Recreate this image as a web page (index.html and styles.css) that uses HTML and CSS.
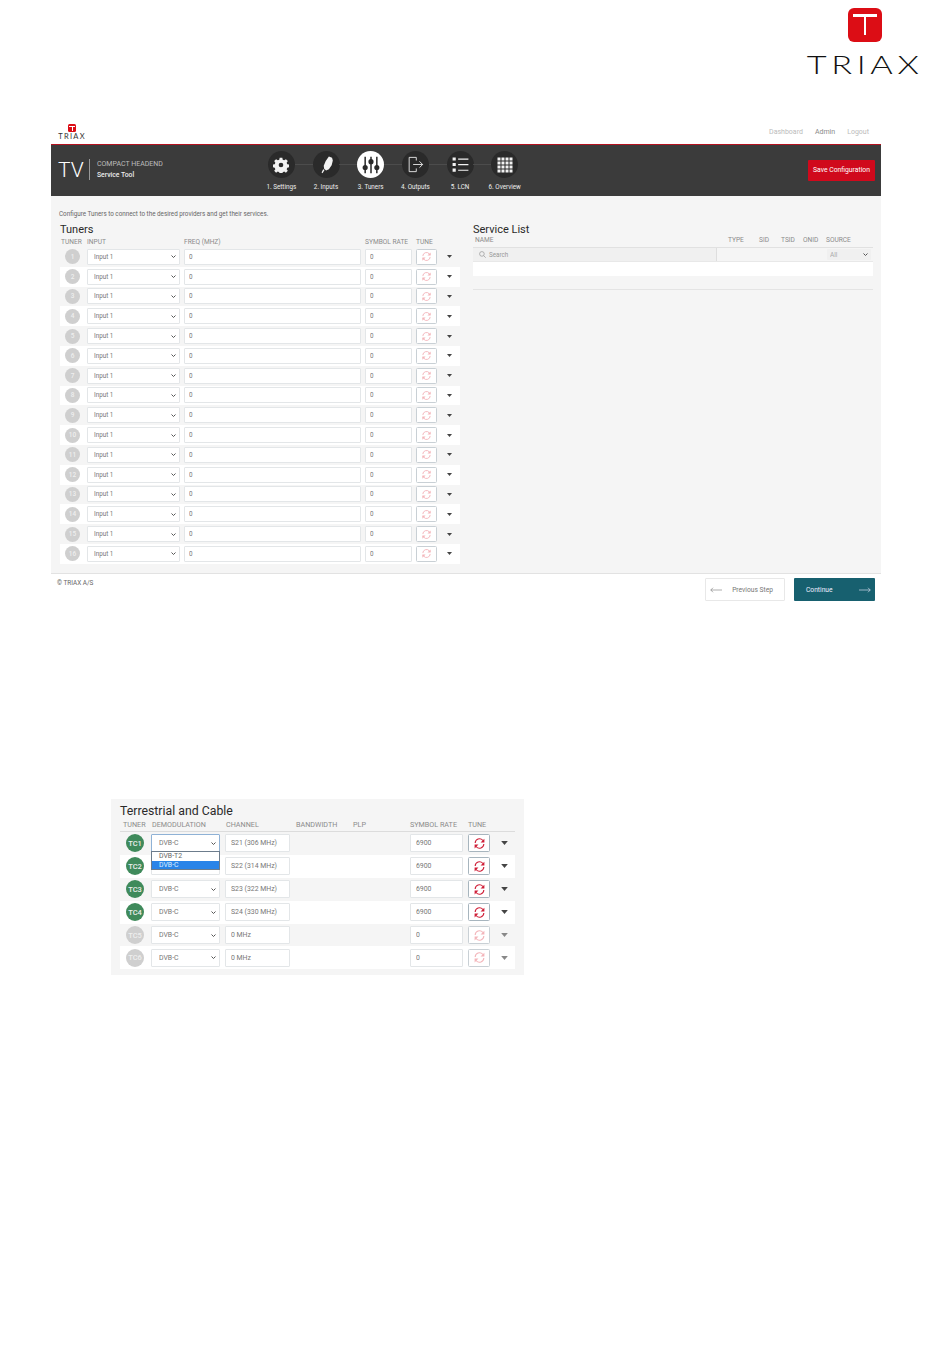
FILE: index.html
```html
<!DOCTYPE html>
<html lang="en">
<head>
    <meta charset="UTF-8">
    <title>TRIAX TV Compact Headend - Tuners</title>
    <link rel="stylesheet" href="styles.css">
</head>
<body>
    <svg class="sprites" width="0" height="0">
        <symbol id="i-sync" viewBox="0 0 24 24">
            <path d="M4 11a8 8 0 0 1 14-5l2 2" fill="none" stroke="currentColor" stroke-width="2"/>
            <path d="M21 3v7h-7z" fill="currentColor"/>
            <path d="M20 13a8 8 0 0 1-14 5l-2-2" fill="none" stroke="currentColor" stroke-width="2"/>
            <path d="M3 21v-7h7z" fill="currentColor"/>
        </symbol>
        <symbol id="i-caret" viewBox="0 0 10 6">
            <path d="M0 0h10L5 6z" fill="currentColor"/>
        </symbol>
    </svg>

    <div class="doc-logo">
        <div class="logo-block">
            <span class="mark"></span>
            <span class="wordmark">TRIAX</span>
        </div>
    </div>

    <div class="app">
        <div class="topbar">
            <div class="brand-small">
                <span class="mark"></span>
                <span class="wordmark">TRIAX</span>
            </div>
            <nav class="toplinks">
                <a>Dashboard</a>
                <a class="current">Admin</a>
                <a>Logout</a>
            </nav>
        </div>

        <header class="app-header">
            <div class="product">
                <span class="product-tv">TV</span>
                <div class="product-name">
                    <span>COMPACT HEADEND</span>
                    <strong>Service Tool</strong>
                </div>
            </div>
            <ol class="steps">
                <li class="step">
                    <span class="step-dot">
                        <svg viewBox="0 0 24 24" width="16" height="16"><path fill="currentColor" d="M10 1h4l.6 3 2.2.9 2.6-1.700 2.800 2.800-1.700 2.600.9 2.200 3 .6v4l-3 .6-.9 2.200 1.700 2.600-2.800 2.800-2.600-1.700-2.200.9-.6 3h-4l-.6-3-2.200-.9-2.600 1.700-2.800-2.800 1.700-2.600-.9-2.200-3-.6v-4l3-.6.9-2.200-1.700-2.600 2.800-2.800 2.600 1.700 2.200-.9zM12 8.500a3.500 3.500 0 1 0 0 7 3.500 3.500 0 0 0 0-7z"/></svg>
                    </span>
                    <span class="step-label">1. Settings</span>
                </li>
                <li class="step">
                    <span class="step-dot">
                        <svg viewBox="0 0 24 24" width="19" height="19"><path fill="currentColor" d="M15 2l4 1.500 1 3.500-1.500 6-3.500 5-3.500 1.500-2.500-2-.5-4 2.500-6zM9.500 19l-2.500 4-1.200-.8 2-4.200z"/></svg>
                    </span>
                    <span class="step-label">2. Inputs</span>
                </li>
                <li class="step is-active">
                    <span class="step-dot">
                        <svg viewBox="0 0 24 24" width="20" height="20"><g stroke="currentColor" stroke-width="1.800" fill="currentColor"><path d="M5 2v20M12 2v20M19 2v20"/><circle cx="5" cy="15" r="2.200"/><circle cx="12" cy="8" r="2.200"/><circle cx="19" cy="15" r="2.200"/></g></svg>
                    </span>
                    <span class="step-label">3. Tuners</span>
                </li>
                <li class="step">
                    <span class="step-dot">
                        <svg viewBox="0 0 24 24" width="19" height="19" fill="none" stroke="currentColor" stroke-width="1.100"><path d="M13 7V3H4v18h9v-4M9 12h12M17 8l4 4-4 4"/></svg>
                    </span>
                    <span class="step-label">4. Outputs</span>
                </li>
                <li class="step">
                    <span class="step-dot">
                        <svg viewBox="0 0 24 24" width="19" height="19" fill="currentColor"><path d="M2 3h4v4H2zM2 10h4v4H2zM2 17h4v4H2zM9 4.500h13V6H9zM9 11.500h13V13H9zM9 18.500h13V20H9z"/></svg>
                    </span>
                    <span class="step-label">5. LCN</span>
                </li>
                <li class="step">
                    <span class="step-dot">
                        <svg viewBox="0 0 24 24" width="18" height="18" fill="currentColor"><path d="M2 2h4v4H2zM7.300 2h4v4h-4zM12.700 2h4v4h-4zM18 2h4v4h-4zM2 7.300h4v4H2zM7.300 7.300h4v4h-4zM12.700 7.300h4v4h-4zM18 7.300h4v4h-4zM2 12.700h4v4H2zM7.300 12.700h4v4h-4zM12.700 12.700h4v4h-4zM18 12.700h4v4h-4zM2 18h4v4H2zM7.300 18h4v4h-4zM12.700 18h4v4h-4zM18 18h4v4h-4z"/></svg>
                    </span>
                    <span class="step-label">6. Overview</span>
                </li>
            </ol>
            <button class="save-btn">Save Configuration</button>
        </header>

        <main class="app-main">
            <p class="intro">Configure Tuners to connect to the desired providers and get their services.</p>
            <div class="panels">
                <section class="tuners">
                    <h2>Tuners</h2>
                    <div class="tuner-grid col-heads">
                        <span>TUNER</span><span>INPUT</span><span>FREQ (MHZ)</span><span>SYMBOL RATE</span><span>TUNE</span>
                    </div>
                    <div class="tuner-grid tuner-row">
                        <span class="num">1</span>
                        <select><option>Input 1</option></select>
                        <input type="text" value="0">
                        <input type="text" value="0">
                        <button class="tune"><svg width="11" height="11"><use href="#i-sync"/></svg></button>
                        <svg class="caret" width="5" height="3"><use href="#i-caret"/></svg>
                    </div>
                    <div class="tuner-grid tuner-row">
                        <span class="num">2</span>
                        <select><option>Input 1</option></select>
                        <input type="text" value="0">
                        <input type="text" value="0">
                        <button class="tune"><svg width="11" height="11"><use href="#i-sync"/></svg></button>
                        <svg class="caret" width="5" height="3"><use href="#i-caret"/></svg>
                    </div>
                    <div class="tuner-grid tuner-row">
                        <span class="num">3</span>
                        <select><option>Input 1</option></select>
                        <input type="text" value="0">
                        <input type="text" value="0">
                        <button class="tune"><svg width="11" height="11"><use href="#i-sync"/></svg></button>
                        <svg class="caret" width="5" height="3"><use href="#i-caret"/></svg>
                    </div>
                    <div class="tuner-grid tuner-row">
                        <span class="num">4</span>
                        <select><option>Input 1</option></select>
                        <input type="text" value="0">
                        <input type="text" value="0">
                        <button class="tune"><svg width="11" height="11"><use href="#i-sync"/></svg></button>
                        <svg class="caret" width="5" height="3"><use href="#i-caret"/></svg>
                    </div>
                    <div class="tuner-grid tuner-row">
                        <span class="num">5</span>
                        <select><option>Input 1</option></select>
                        <input type="text" value="0">
                        <input type="text" value="0">
                        <button class="tune"><svg width="11" height="11"><use href="#i-sync"/></svg></button>
                        <svg class="caret" width="5" height="3"><use href="#i-caret"/></svg>
                    </div>
                    <div class="tuner-grid tuner-row">
                        <span class="num">6</span>
                        <select><option>Input 1</option></select>
                        <input type="text" value="0">
                        <input type="text" value="0">
                        <button class="tune"><svg width="11" height="11"><use href="#i-sync"/></svg></button>
                        <svg class="caret" width="5" height="3"><use href="#i-caret"/></svg>
                    </div>
                    <div class="tuner-grid tuner-row">
                        <span class="num">7</span>
                        <select><option>Input 1</option></select>
                        <input type="text" value="0">
                        <input type="text" value="0">
                        <button class="tune"><svg width="11" height="11"><use href="#i-sync"/></svg></button>
                        <svg class="caret" width="5" height="3"><use href="#i-caret"/></svg>
                    </div>
                    <div class="tuner-grid tuner-row">
                        <span class="num">8</span>
                        <select><option>Input 1</option></select>
                        <input type="text" value="0">
                        <input type="text" value="0">
                        <button class="tune"><svg width="11" height="11"><use href="#i-sync"/></svg></button>
                        <svg class="caret" width="5" height="3"><use href="#i-caret"/></svg>
                    </div>
                    <div class="tuner-grid tuner-row">
                        <span class="num">9</span>
                        <select><option>Input 1</option></select>
                        <input type="text" value="0">
                        <input type="text" value="0">
                        <button class="tune"><svg width="11" height="11"><use href="#i-sync"/></svg></button>
                        <svg class="caret" width="5" height="3"><use href="#i-caret"/></svg>
                    </div>
                    <div class="tuner-grid tuner-row">
                        <span class="num">10</span>
                        <select><option>Input 1</option></select>
                        <input type="text" value="0">
                        <input type="text" value="0">
                        <button class="tune"><svg width="11" height="11"><use href="#i-sync"/></svg></button>
                        <svg class="caret" width="5" height="3"><use href="#i-caret"/></svg>
                    </div>
                    <div class="tuner-grid tuner-row">
                        <span class="num">11</span>
                        <select><option>Input 1</option></select>
                        <input type="text" value="0">
                        <input type="text" value="0">
                        <button class="tune"><svg width="11" height="11"><use href="#i-sync"/></svg></button>
                        <svg class="caret" width="5" height="3"><use href="#i-caret"/></svg>
                    </div>
                    <div class="tuner-grid tuner-row">
                        <span class="num">12</span>
                        <select><option>Input 1</option></select>
                        <input type="text" value="0">
                        <input type="text" value="0">
                        <button class="tune"><svg width="11" height="11"><use href="#i-sync"/></svg></button>
                        <svg class="caret" width="5" height="3"><use href="#i-caret"/></svg>
                    </div>
                    <div class="tuner-grid tuner-row">
                        <span class="num">13</span>
                        <select><option>Input 1</option></select>
                        <input type="text" value="0">
                        <input type="text" value="0">
                        <button class="tune"><svg width="11" height="11"><use href="#i-sync"/></svg></button>
                        <svg class="caret" width="5" height="3"><use href="#i-caret"/></svg>
                    </div>
                    <div class="tuner-grid tuner-row">
                        <span class="num">14</span>
                        <select><option>Input 1</option></select>
                        <input type="text" value="0">
                        <input type="text" value="0">
                        <button class="tune"><svg width="11" height="11"><use href="#i-sync"/></svg></button>
                        <svg class="caret" width="5" height="3"><use href="#i-caret"/></svg>
                    </div>
                    <div class="tuner-grid tuner-row">
                        <span class="num">15</span>
                        <select><option>Input 1</option></select>
                        <input type="text" value="0">
                        <input type="text" value="0">
                        <button class="tune"><svg width="11" height="11"><use href="#i-sync"/></svg></button>
                        <svg class="caret" width="5" height="3"><use href="#i-caret"/></svg>
                    </div>
                    <div class="tuner-grid tuner-row">
                        <span class="num">16</span>
                        <select><option>Input 1</option></select>
                        <input type="text" value="0">
                        <input type="text" value="0">
                        <button class="tune"><svg width="11" height="11"><use href="#i-sync"/></svg></button>
                        <svg class="caret" width="5" height="3"><use href="#i-caret"/></svg>
                    </div>
                </section>

                <section class="services">
                    <h2>Service List</h2>
                    <div class="service-grid col-heads">
                        <span>NAME</span><span>TYPE</span><span>SID</span><span>TSID</span><span>ONID</span><span>SOURCE</span>
                    </div>
                    <div class="service-filter">
                        <div class="search">
                            <svg viewBox="0 0 24 24" width="7" height="7" fill="none" stroke="currentColor" stroke-width="2.500"><circle cx="10" cy="10" r="8"/><path d="M16 16l7 7"/></svg>
                            <span>Search</span>
                        </div>
                        <div class="filter-blank"></div>
                        <select class="source"><option>All</option></select>
                    </div>
                    <div class="service-white"></div>
                    <div class="service-grey"></div>
                </section>
            </div>
        </main>

        <footer class="app-footer">
            <span class="copy">© TRIAX A/S</span>
            <div class="pager">
                <button class="prev-btn">
                    <svg viewBox="0 0 16 8" width="12" height="6" fill="none" stroke="currentColor" stroke-width="0.800"><path d="M16 4H1M4 1L1 4l3 3"/></svg>
                    <span>Previous Step</span>
                </button>
                <button class="next-btn">
                    <span>Continue</span>
                    <svg viewBox="0 0 16 8" width="12" height="6" fill="none" stroke="currentColor" stroke-width="0.800"><path d="M0 4h15M12 1l3 3-3 3"/></svg>
                </button>
            </div>
        </footer>
    </div>

    <div class="terrestrial">
        <h2>Terrestrial and Cable</h2>
        <div class="tc-grid col-heads">
            <span>TUNER</span><span>DEMODULATION</span><span>CHANNEL</span><span>BANDWIDTH</span><span>PLP</span><span>SYMBOL RATE</span><span>TUNE</span>
        </div>
        <div class="tc-grid tc-row">
            <span class="num on">TC1</span>
            <div class="demod">
                <select class="focus"><option>DVB-C</option></select>
                <ul class="demod-list">
                    <li>DVB-T2</li>
                    <li class="picked">DVB-C</li>
                </ul>
            </div>
            <input type="text" value="S21 (306 MHz)">
            <span></span><span></span>
            <input type="text" value="6900">
            <button class="tune on"><svg width="13" height="13"><use href="#i-sync"/></svg></button>
            <svg class="caret" width="7" height="4"><use href="#i-caret"/></svg>
        </div>
        <div class="tc-grid tc-row">
            <span class="num on">TC2</span>
            <select><option>DVB-C</option></select>
            <input type="text" value="S22 (314 MHz)">
            <span></span><span></span>
            <input type="text" value="6900">
            <button class="tune on"><svg width="13" height="13"><use href="#i-sync"/></svg></button>
            <svg class="caret" width="7" height="4"><use href="#i-caret"/></svg>
        </div>
        <div class="tc-grid tc-row">
            <span class="num on">TC3</span>
            <select><option>DVB-C</option></select>
            <input type="text" value="S23 (322 MHz)">
            <span></span><span></span>
            <input type="text" value="6900">
            <button class="tune on"><svg width="13" height="13"><use href="#i-sync"/></svg></button>
            <svg class="caret" width="7" height="4"><use href="#i-caret"/></svg>
        </div>
        <div class="tc-grid tc-row">
            <span class="num on">TC4</span>
            <select><option>DVB-C</option></select>
            <input type="text" value="S24 (330 MHz)">
            <span></span><span></span>
            <input type="text" value="6900">
            <button class="tune on"><svg width="13" height="13"><use href="#i-sync"/></svg></button>
            <svg class="caret" width="7" height="4"><use href="#i-caret"/></svg>
        </div>
        <div class="tc-grid tc-row">
            <span class="num">TC5</span>
            <select><option>DVB-C</option></select>
            <input type="text" value="0 MHz">
            <span></span><span></span>
            <input type="text" value="0">
            <button class="tune"><svg width="13" height="13"><use href="#i-sync"/></svg></button>
            <svg class="caret off" width="7" height="4"><use href="#i-caret"/></svg>
        </div>
        <div class="tc-grid tc-row">
            <span class="num">TC6</span>
            <select><option>DVB-C</option></select>
            <input type="text" value="0 MHz">
            <span></span><span></span>
            <input type="text" value="0">
            <button class="tune"><svg width="13" height="13"><use href="#i-sync"/></svg></button>
            <svg class="caret off" width="7" height="4"><use href="#i-caret"/></svg>
        </div>
    </div>
</body>
</html>
```

FILE: styles.css
```css
:root {
    --red: #d0091c;
    --dark: #3b3b3b;
    --panel: #f5f5f5;
    --line: #e3e6e8;
    --label: #8b8b8b;
    --teal: #17606f;
}

* {
    box-sizing: border-box;
}

body {
    margin: 0;
    background-color: #fff;
    font-family: Roboto, "Liberation Sans", sans-serif;
    color: #777;
}

.sprites {
    position: absolute;
}

h2 {
    margin: 0;
    font-weight: 400;
    color: #2a2a2a;
}

input, select {
    min-width: 0;
    width: 100%;
    background-color: #fff;
    border: 1px solid var(--line);
    border-radius: 1px;
    font-family: inherit;
    color: #777;
}

select {
    appearance: none;
    background-image: url("data:image/svg+xml,%3Csvg xmlns='http://www.w3.org/2000/svg' viewBox='0 0 10 6'%3E%3Cpath d='M1 1l4 4 4-4' fill='none' stroke='%23555' stroke-width='2'/%3E%3C/svg%3E");
    background-repeat: no-repeat;
    background-position: right 3px center;
    background-size: 5px 3px;
}

/* logos */
.mark {
    display: block;
    position: relative;
    background-color: #dc0d15;
}

.mark::before, .mark::after {
    content: "";
    position: absolute;
    background-color: #fff;
}

.wordmark {
    display: block;
    font-family: Lato, sans-serif;
    font-weight: 300;
    color: #111;
}

.doc-logo {
    display: flex;
    justify-content: flex-end;
    height: 122px;
    padding: 8px 27px 0 0;
}

.logo-block {
    display: flex;
    flex-direction: column;
    align-items: center;
    width: 116px;
}

.logo-block .mark {
    width: 34px;
    height: 34px;
    border-radius: 6px;
}

.logo-block .mark::before {
    left: 5px;
    right: 5px;
    top: 6px;
    height: 2.500px;
}

.logo-block .mark::after {
    left: 15.750px;
    top: 6px;
    width: 2.500px;
    height: 21px;
}

.logo-block .wordmark {
    margin-top: 5px;
    font-size: 26px;
    line-height: 34px;
    letter-spacing: 3.500px;
    transform: scaleX(1.32);
    white-space: nowrap;
}

/* first screenshot */
.app {
    width: 830px;
    margin-left: 51px;
}

.topbar {
    display: flex;
    justify-content: space-between;
    height: 22px;
    padding: 2px 12px 0 7px;
}

.brand-small {
    display: flex;
    flex-direction: column;
    align-items: center;
    width: 28px;
}

.brand-small .mark {
    width: 8px;
    height: 8px;
    border-radius: 1.500px;
}

.brand-small .mark::before {
    left: 1px;
    right: 1px;
    top: 1.500px;
    height: 1px;
}

.brand-small .mark::after {
    left: 3.500px;
    top: 1.500px;
    width: 1px;
    height: 5px;
}

.brand-small .wordmark {
    font-size: 7.500px;
    line-height: 9px;
    letter-spacing: 1.300px;
    font-weight: 400;
    color: #333;
}

.toplinks {
    display: flex;
    gap: 12px;
    padding-top: 4px;
    font-size: 7px;
    color: #bbb;
}

.toplinks .current {
    color: #8a8a8a;
}

.app-header {
    display: flex;
    align-items: flex-start;
    height: 52px;
    padding-left: 7px;
    background-color: var(--dark);
    border-top: 1.500px solid #b5121f;
}

.product {
    display: flex;
    align-items: center;
    width: 201px;
    height: 40px;
    padding-top: 9px;
}

.product-tv {
    width: 31px;
    font-size: 21px;
    font-weight: 300;
    color: #fff;
}

.product-name {
    display: flex;
    flex-direction: column;
    gap: 3px;
    padding: 1px 0 1px 7px;
    border-left: 1px solid #999;
    font-size: 7px;
    line-height: 8px;
    color: #bbb;
}

.product-name strong {
    color: #eee;
    font-weight: 500;
    font-size: 6.800px;
}

.steps {
    display: flex;
    width: 268px;
    margin: 0;
    padding: 6px 0 0;
    list-style: none;
}

.step {
    position: relative;
    display: flex;
    flex-direction: column;
    align-items: center;
    gap: 5px;
    width: 44.700px;
    font-size: 6.300px;
    color: #eee;
}

.step + .step::before {
    content: "";
    position: absolute;
    left: -9px;
    width: 18px;
    top: 13px;
    height: 1px;
    background-color: #4c4c4c;
}

.step-dot {
    display: flex;
    align-items: center;
    justify-content: center;
    width: 27px;
    height: 27px;
    border-radius: 50%;
    background-color: #2a2a2a;
    color: #f2f2f2;
}

.step.is-active .step-dot {
    background-color: #fff;
    color: #2a2a2a;
}

.step-label {
    line-height: 8px;
    white-space: nowrap;
}

.save-btn {
    width: 67px;
    height: 21px;
    margin: 14.500px 6px 0 auto;
    padding: 0;
    border: 0;
    border-radius: 1px;
    background-color: var(--red);
    color: #fff;
    font-family: inherit;
    font-size: 6.800px;
}

.app-main {
    height: 378px;
    padding: 14px 8px 0 8px;
    background-color: var(--panel);
    border-bottom: 1px solid #e2e2e2;
}

.intro {
    margin: 0;
    font-size: 6.300px;
    line-height: 8px;
    color: #666;
}

.panels {
    display: flex;
    gap: 13px;
    margin-top: 5px;
}

.panels h2 {
    font-size: 11px;
    line-height: 13px;
}

.tuners, .services {
    width: 400px;
}

.tuners {
    margin-left: 1px;
}

.col-heads {
    font-size: 6.600px;
    line-height: 8px;
    color: var(--label);
    white-space: nowrap;
}

.tuner-grid {
    display: grid;
    grid-template-columns: 23px 93px 177px 47px 21px 1fr;
    column-gap: 4px;
    align-items: center;
}

.tuners .col-heads {
    height: 11px;
}

.tuners .col-heads span:first-child {
    margin-left: 1px;
}

.tuner-row {
    height: 19.800px;
    font-size: 6.300px;
}

.tuner-row:nth-child(even) {
    background-color: #fff;
}

.tuner-row input, .tuner-row select {
    height: 16px;
    padding: 0 4px;
    font-size: 6.300px;
}

.tuner-row select {
    padding-left: 6px;
}

.num {
    display: flex;
    align-items: center;
    justify-content: center;
    width: 15px;
    height: 15px;
    margin-left: 5px;
    border-radius: 50%;
    background-color: #cfcfcf;
    color: #eee;
    font-size: 6.500px;
    font-weight: 500;
}

.tune {
    display: flex;
    align-items: center;
    justify-content: center;
    width: 100%;
    height: 16px;
    padding: 0;
    background-color: #fff;
    border: 1px solid #c9d0d5;
    border-radius: 1.500px;
    color: #f3b5ba;
}

.tune.on {
    color: #cf1f38;
    border-color: #a7b5be;
}

.caret {
    justify-self: center;
    margin-right: 2px;
    color: #444;
}

.caret.off {
    color: #888;
}

.service-grid {
    display: grid;
    grid-template-columns: 253px 31px 22px 22px 23px 1fr;
    height: 11px;
    padding-left: 2px;
}

.service-filter {
    display: flex;
    align-items: center;
    height: 15px;
    border-top: 1px solid #e1e1e1;
    border-bottom: 1px solid #e8e8e8;
}

.search {
    display: flex;
    align-items: center;
    gap: 3px;
    width: 244px;
    height: 13px;
    padding-left: 6px;
    background-color: #f0f0f0;
    border-right: 1px solid #dedede;
    font-size: 6.300px;
    color: #999;
}

.filter-blank {
    flex: 1;
}

.service-filter .source {
    width: 44px;
    height: 11px;
    margin-right: 2px;
    padding: 0 3px;
    border: 0;
    background-color: #f0f0f0;
    font-size: 6.500px;
    color: #aaa;
}

.service-white {
    height: 14px;
    background-color: #fff;
}

.service-grey {
    height: 14px;
    border-bottom: 1px solid #e4e4e4;
}

.app-footer {
    display: flex;
    justify-content: space-between;
    height: 28px;
    padding: 4px 6px 0 6px;
}

.copy {
    padding-top: 1px;
    font-size: 6.400px;
    line-height: 8px;
    color: #666;
}

.pager {
    display: flex;
    gap: 9px;
}

.prev-btn, .next-btn {
    display: flex;
    align-items: center;
    justify-content: space-between;
    height: 23px;
    padding: 0 4px;
    border-radius: 1px;
    font-family: inherit;
    font-size: 6.700px;
}

.prev-btn {
    width: 80px;
    padding-right: 11px;
    background-color: #fff;
    border: 1px solid #e8e8e8;
    color: #777;
}

.next-btn {
    width: 81px;
    padding-left: 12px;
    background-color: var(--teal);
    border: 0;
    color: #eef;
}

/* second screenshot */
.terrestrial {
    width: 413px;
    height: 176px;
    margin: 197px 0 0 111px;
    padding: 6px 9px 0;
    background-color: var(--panel);
}

.terrestrial h2 {
    font-size: 12.300px;
    line-height: 13px;
}

.tc-grid {
    display: grid;
    grid-template-columns: 26px 69px 65px 52px 53px 53px 22px 1fr;
    column-gap: 5px;
    align-items: center;
}

.terrestrial .col-heads {
    height: 14px;
    padding-left: 3px;
    padding-top: 1px;
    border-bottom: 1px solid #dcdcdc;
    font-size: 7.200px;
    grid-template-columns: 24px 69px 65px 52px 52px 53px 22px 1fr;
}

.tc-row {
    height: 22.900px;
}

.tc-row:nth-child(even) {
    background-color: #fff;
}

.tc-row input, .tc-row select {
    height: 18px;
    padding: 0 5px;
    font-size: 6.900px;
}

.tc-row select {
    padding-left: 7px;
    background-position: right 3px center;
}

.tc-row .num {
    width: 18px;
    height: 18px;
    margin-left: 6px;
    font-size: 7.500px;
}

.num.on {
    background-color: #3f8a5b;
}

.tc-row .tune {
    height: 18px;
}

.demod {
    position: relative;
}

.tc-row select.focus {
    display: block;
    border-color: #8fb2d6;
}

.demod-list {
    position: absolute;
    z-index: 2;
    left: 0;
    right: 0;
    top: 17px;
    margin: 0;
    padding: 0;
    list-style: none;
    background-color: #fff;
    border: 1px solid #6c7c8c;
    font-size: 6.900px;
    line-height: 8.500px;
    color: #666;
}

.demod-list li {
    padding-left: 7px;
}

.demod-list .picked {
    background-color: #2a84e8;
    color: #dfeeff;
}
```
